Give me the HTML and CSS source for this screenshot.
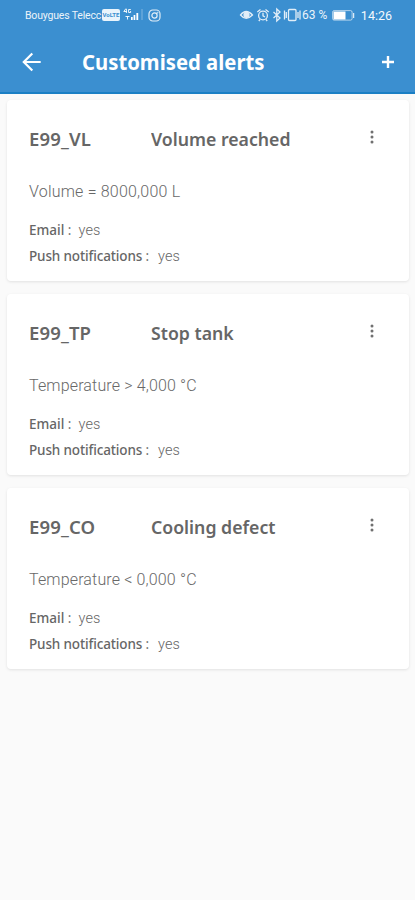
FILE: index.html
```html
<!DOCTYPE html>
<html lang="en">
<head>
<meta charset="utf-8">
<title>Customised alerts</title>
<link rel="stylesheet" href="styles.css">
</head>
<body>
<header class="top">
  <div class="status">
    <span class="carrier">Bouygues Telecc</span>
    <span class="volte">VoLTE</span>
    <svg class="signal" width="22" height="14" viewBox="0 0 22 14"><path d="M3 .5L.8 3.5h3M3.4 1v4M7.8 1.5H5.6v3h2V3M2.5 8.5h4M4.5 8.5v3" fill="none" stroke="#fff" stroke-width=".9"/><path d="M8 9h1.7v3H8zM10.6 7h1.7v5h-1.7zM13.4 5h1.8v7h-1.8z" fill="#fff"/><path d="M19 1v11" stroke="#fff" opacity=".35"/></svg>
    <svg class="insta" width="13" height="13" viewBox="0 0 13 13" fill="none" stroke="#fff" stroke-width="1.200"><rect x="1" y="1" width="11" height="11" rx="3.8"/><circle cx="6.5" cy="6.5" r="2.6"/><circle cx="9.5" cy="3.6" r=".3"/></svg>
    <span class="spacer"></span>
    <svg class="indicators" width="64" height="16" viewBox="0 0 64 16" fill="none" stroke="#fff" stroke-width="1.300">
      <path d="M2.500 8Q8 1 14.500 8Q8 14.500 2.500 8Z"/><circle cx="8.500" cy="7.800" r="2.500" fill="#fff"/>
      <circle cx="25" cy="8.500" r="4.400"/><path d="M25 5.800v3l2 1.200M19.300 5l3.200-2.600M30.700 5l-3.200-2.600M22 12.500l-1.200 1.500M28 12.500l1.200 1.500"/>
      <path d="M35.500 5l6.500 6-3.200 3V2L42 5l-6.500 6"/>
      <rect x="50.500" y="2.500" width="7.500" height="11" rx="1"/><path d="M46.500 3.500v9M48.300 5v6M60 5v6M62 3.500v9"/>
    </svg>
    <span class="percent">63 %</span>
    <svg class="battery" width="23" height="11" viewBox="0 0 23 11"><rect x=".6" y=".6" width="19.500" height="9.500" rx="1.500" fill="none" stroke="#fff" stroke-opacity=".6"/><path d="M1.500 1.500h12v8h-12z" fill="#fff"/><path d="M21.700 3v5" stroke="#fff"/></svg>
    <span class="clock">14:26</span>
  </div>
  <div class="bar">
    <svg class="back" width="20" height="20" viewBox="0 0 20 20"><path d="M18.700 10H2M10.300 1.500L1.800 10l8.500 8.500" fill="none" stroke="#fff" stroke-width="2.200"/></svg>
    <h1>Customised alerts</h1>
    <svg class="add" width="14" height="14" viewBox="0 0 14 14"><path d="M7 1v12M1 7h12" stroke="#fff" stroke-width="2.400"/></svg>
  </div>
</header>
<main>
  <article class="card">
    <div class="head"><h2>E99_VL</h2><h3>Volume reached</h3><svg class="more" width="4" height="14" viewBox="0 0 4 14"><circle cx="2" cy="2" r="1.500"/><circle cx="2" cy="7" r="1.500"/><circle cx="2" cy="12" r="1.500"/></svg></div>
    <p class="rule">Volume = 8000,000 L</p>
    <p class="line email"><b>Email <i>:</i></b><span>yes</span></p>
    <p class="line push"><b>Push notifications <i>:</i></b><span>yes</span></p>
  </article>
  <article class="card">
    <div class="head"><h2>E99_TP</h2><h3>Stop tank</h3><svg class="more" width="4" height="14" viewBox="0 0 4 14"><circle cx="2" cy="2" r="1.500"/><circle cx="2" cy="7" r="1.500"/><circle cx="2" cy="12" r="1.500"/></svg></div>
    <p class="rule temp">Temperature &gt; 4,000 °C</p>
    <p class="line email"><b>Email <i>:</i></b><span>yes</span></p>
    <p class="line push"><b>Push notifications <i>:</i></b><span>yes</span></p>
  </article>
  <article class="card">
    <div class="head"><h2>E99_CO</h2><h3>Cooling defect</h3><svg class="more" width="4" height="14" viewBox="0 0 4 14"><circle cx="2" cy="2" r="1.500"/><circle cx="2" cy="7" r="1.500"/><circle cx="2" cy="12" r="1.500"/></svg></div>
    <p class="rule temp">Temperature &lt; 0,000 °C</p>
    <p class="line email"><b>Email <i>:</i></b><span>yes</span></p>
    <p class="line push"><b>Push notifications <i>:</i></b><span>yes</span></p>
  </article>
</main>
</body>
</html>
```
FILE: styles.css
```css
* { box-sizing: border-box; }
body { margin: 0; min-height: 900px; background: #fafafa; color: #666; font-family: Roboto, sans-serif; }
h1, h2, h3, p { margin: 0; }
svg { display: block; flex: none; }
.top { height: 94px; background: #3b8fd0; border-bottom: 2px solid #1b7fc4; color: #fff; }
.status { display: flex; align-items: center; height: 30px; padding: 0 23px 0 25px; white-space: nowrap; }
.carrier { width: 77px; font-size: 10.500px; letter-spacing: -.18px; opacity: .9; }
.volte { width: 18px; height: 12px; border-radius: 2px; background: #e9f4fc; color: #3b8fd0; font-size: 6px; font-weight: 700; line-height: 12px; text-align: center; }
.signal { margin-left: 3px; }
.insta { margin-left: 3px; opacity: .85; }
.spacer { flex: 1; }
.indicators { opacity: .85; }
.percent { width: 29px; font-size: 12px; opacity: .9; }
.battery { margin-left: 1px; }
.clock { width: 33px; margin-left: 4px; font-size: 12.500px; text-align: right; opacity: .95; }
.bar { display: flex; align-items: center; height: 62px; padding: 2px 20px 0 22px; }
h1 { flex: 1; margin: 0 0 2px 40px; font: 700 22px/30px "Noto Sans", sans-serif; transform: scaleX(.922); transform-origin: left; }
main { display: grid; gap: 13px; padding: 6px 6px 0 7px; }
.card { height: 181px; padding: 24px 35px 0 22px; border-radius: 4px; background: #fff; box-shadow: 0 1px 3px rgba(0, 0, 0, .1); }
.head { display: flex; height: 30px; align-items: center; }
h2, h3 { font: 600 18.500px/30px "Noto Sans", sans-serif; white-space: nowrap; }
h2 { width: 122px; letter-spacing: .15px; }
h3 { flex: 1; transform: scaleX(.956); transform-origin: left; }
.more { fill: #707070; margin-bottom: 5px; }
.rule { margin-top: 25px; color: #686868; font-size: 16px; font-weight: 300; line-height: 25px; letter-spacing: .2px; }
.rule.temp { letter-spacing: .15px; }
.line { display: flex; gap: 7px; font-size: 14.500px; font-weight: 300; line-height: 26px; }
.line span { height: 26px; padding-top: 1px; letter-spacing: .15px; }
.line b { font: 500 13.500px/26px "Noto Sans", sans-serif; }
.line i { font-style: normal; font-weight: 400; color: #777; }
.push { gap: 9px; }
.push b { letter-spacing: -.14px; }
.email { margin-top: 13px; }
```
